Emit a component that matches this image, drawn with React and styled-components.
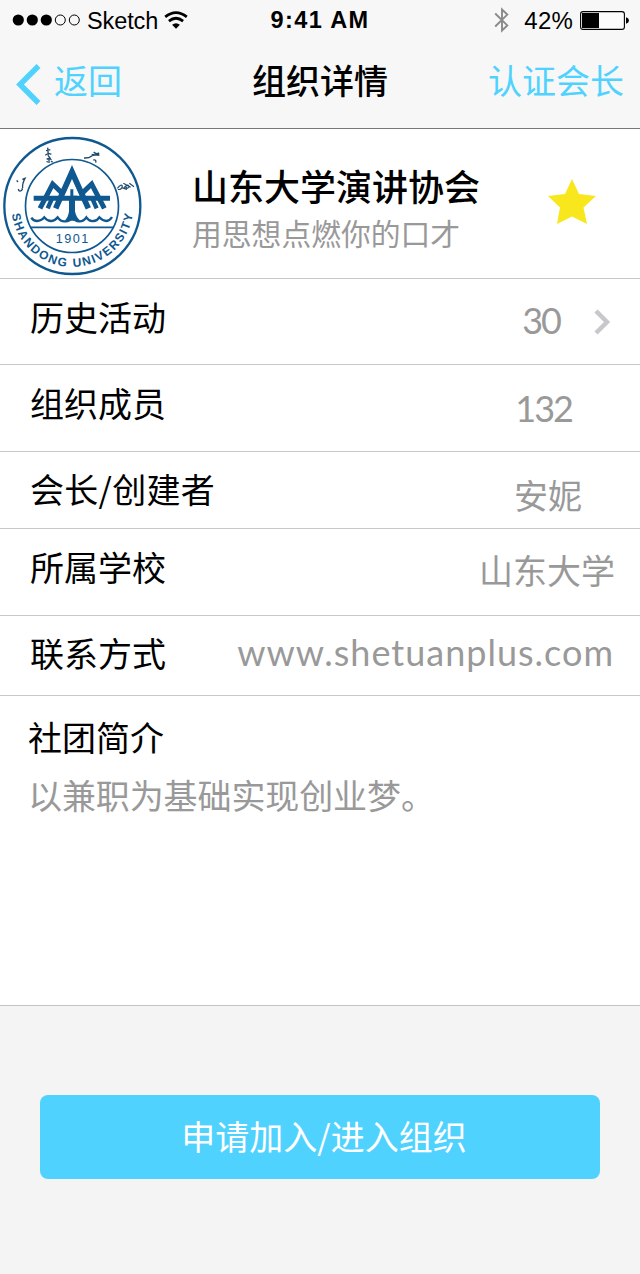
import React from 'react';
import styled, { createGlobalStyle } from 'styled-components';

const cjk = '"Noto Sans CJK SC", sans-serif';
const helv = '"Liberation Sans", Arial, sans-serif';

const GlobalStyle = createGlobalStyle`
  * { box-sizing: border-box; }
  body { margin: 0; background: #f4f4f4; }
`;

const Screen = styled.div`
  width: 640px;
  height: 1274px;
  display: flex;
  flex-direction: column;
  background: #f4f4f4;
  font-family: ${cjk};
  color: #000;
  white-space: nowrap;
  overflow: hidden;
`;

const Header = styled.header`
  height: 129px;
  flex: none;
  background: #f7f7f7;
  border-bottom: 1px solid #777;
`;

const StatusBar = styled.div`
  height: 40px;
  display: grid;
  grid-template-columns: 1fr auto 1fr;
  align-items: center;
  font: 24px/40px ${helv};
`;

const StatusGroup = styled.div`
  display: flex;
  align-items: center;
  height: 40px;
  justify-content: ${(p) => (p.$end ? 'flex-end' : 'flex-start')};
  padding: ${(p) => (p.$end ? '0 11px 0 0' : '0 0 0 12px')};
`;

const Carrier = styled.span`
  margin: 1px 6px 0 7px;
  font-size: 23.5px;
  letter-spacing: -0.1px;
`;

const Clock = styled.span`
  font-weight: 700;
  font-size: 23.5px;
  letter-spacing: 1.4px;
`;

const Percent = styled.span`
  margin: 1px 7px 0 14px;
  font-size: 24px;
  letter-spacing: 0.2px;
`;

const NavBar = styled.nav`
  height: 88px;
  display: grid;
  grid-template-columns: 1fr auto 1fr;
  font-size: 34px;
  line-height: 34px;
  padding: 23px 16px 0 16px;
`;

const NavLink = styled.a`
  display: flex;
  color: #50d2ff;
  gap: 13px;
  justify-content: ${(p) => (p.$end ? 'flex-end' : 'flex-start')};
`;

const NavTitle = styled.h1`
  margin: 0;
  font-size: 34px;
  line-height: 34px;
  font-weight: 500;
`;

const BackIcon = styled.svg`
  margin-top: 1px;
  flex: none;
`;

const Profile = styled.section`
  height: 150px;
  flex: none;
  display: flex;
  background: #fff;
  border-bottom: 1px solid #c8c7cc;
`;

const ProfileText = styled.div`
  margin-left: 42px;
  width: 356px;
  padding-top: 38px;
`;

const OrgName = styled.h2`
  margin: 0;
  font-size: 36px;
  line-height: 36px;
  font-weight: 500;
`;

const Slogan = styled.p`
  margin: 14px 0 0;
  font-size: 29.8px;
  line-height: 30px;
  color: #999;
`;

const Star = styled.svg`
  margin-top: 50px;
`;

const Row = styled.div`
  height: ${(p) => p.$height}px;
  flex: none;
  display: flex;
  justify-content: space-between;
  padding-left: 30px;
  background: #fff;
  border-bottom: 1px solid #c8c8c8;
  font-size: 34px;
  line-height: 34px;
`;

const Label = styled.span`
  margin-top: ${(p) => p.$top}px;
  letter-spacing: ${(p) => p.$spacing || 0}px;
`;

const Value = styled.span`
  display: flex;
  margin-top: ${(p) => p.$top}px;
  margin-right: ${(p) => p.$right}px;
  color: #999;
  font-family: ${(p) => (p.$latin ? 'Lato, sans-serif' : cjk)};
  font-size: ${(p) => p.$size || 34}px;
  letter-spacing: ${(p) => p.$spacing || 0}px;
`;

const Chevron = styled.svg`
  margin: 6px 0 0 34px;
`;

const About = styled.section`
  height: 310px;
  flex: none;
  background: #fff;
  border-bottom: 1px solid #c4c4c4;
  padding: 24px 28px 0;
  font-size: 34px;
  line-height: 34px;
`;

const AboutTitle = styled.h3`
  margin: 0;
  font: inherit;
`;

const AboutText = styled.p`
  margin: 24px 0 0;
  color: #999;
  letter-spacing: -0.1px;
`;

const JoinButton = styled.button`
  display: block;
  flex: none;
  width: 560px;
  height: 84px;
  margin: 89px 40px 0;
  padding: 0 0 3px 8px;
  border: 0;
  border-radius: 8px;
  background: #50d2ff;
  color: #fff;
  font: 34px/34px ${cjk};
`;

function SignalDots() {
  return (
    <svg width="68" height="12" viewBox="0 0 68 12">
      {[0, 1, 2, 3, 4].map((i) => (
        <circle key={i} cx={6.3 + i * 14} cy="6" r={i < 3 ? 5.6 : 5} fill={i < 3 ? '#000' : 'none'} stroke="#000" strokeWidth={i < 3 ? 0 : 1} />
      ))}
    </svg>
  );
}

function WifiIcon() {
  return (
    <svg width="24" height="18" viewBox="0 0 24 18" fill="none" stroke="#000" strokeWidth="2.7">
      <path d="M1.2 5.9 Q12 -2.6 22.8 5.9" />
      <path d="M4.9 10.1 Q12 4.4 19.1 10.1" />
      <path d="M8.1 13.8 Q12 10.6 15.9 13.8 L12 17.8Z" fill="#000" stroke="none" />
    </svg>
  );
}

function BluetoothIcon() {
  return (
    <svg width="16" height="26" viewBox="0 0 16 26" fill="none" stroke="#8a8a8a" strokeWidth="1.9">
      <path d="M1.2 6.5 L13.3 18.4 L8 23.5 V2.5 L13.3 7.6 L1.2 19.5" />
    </svg>
  );
}

function BatteryIcon() {
  return (
    <svg width="49" height="19" viewBox="0 0 49 19">
      <rect x=".6" y=".6" width="43.8" height="17.8" rx="2.5" fill="#fbfbfb" stroke="#000" strokeWidth="1.1" />
      <rect x="2" y="2" width="17" height="15" fill="#000" />
      <path d="M46 6.2 Q49 7.2 49 9.5 Q49 11.8 46 12.8Z" />
    </svg>
  );
}

function UniversityLogo() {
  const blue = '#0f5890';
  return (
    <svg width="150" height="149" viewBox="0 3 450 447" fill="none" stroke={blue}>
      <defs>
        <path id="rim" d="M 35.6 258 A 183 183 0 0 0 398.4 258" />
      </defs>
      <circle cx="217" cy="234" r="204" strokeWidth="7" />
      <circle cx="216" cy="234" r="139.5" strokeWidth="5" />
      <path d="M91 298 H341" strokeWidth="5" />
      <path d="M101 211 H330" strokeWidth="15" />
      <g strokeWidth="15">
        <path d="M120 241 L158 168 L187 196" />
        <path d="M313 241 L275 168 L246 196" />
        <path d="M167 241 L216 132 L265 241" strokeWidth="17" />
        <path d="M143 241 L155 214 M290 241 L278 214" strokeWidth="13" />
      </g>
      <path d="M211 184 H220 V203 H232 L225 212 V250 Q228 268 241 278 H194 Q205 268 207 250 V218 L200 206 H211Z" fill={blue} stroke="none" />
      <path d="M94 269 Q100 279 111 279 Q124 279 133 268 Q142 280 155 279 Q165 278 173 268 Q182 281 195 280 Q208 281 216 268 Q226 281 239 280 Q251 280 259 268 Q268 281 280 279 Q291 279 298 268 Q308 279 319 279 Q330 278 336 267" strokeWidth="7" />
      <g strokeWidth="4" stroke="#20486a">
        <path d="M50 157 L54 162 M55 183 Q57 193 65 187 Q69 184 65 181 M67 154 L75 151 Q66 168 68 180" />
        <path d="M138 68 L151 65 M143 59 L145 82 M136 82 Q145 74 154 79 M144 82 L151 91 M140 94 Q149 88 154 96 M147 91 V105 M140 100 L143 103 M153 99 L158 103" />
        <path d="M252 90 Q267 91 276 83 L298 78 M281 72 Q290 81 297 74 M275 79 L298 82 M280 96 Q290 94 287 104" />
        <path d="M352 181 Q365 166 367 175 Q364 187 354 184 M370 166 L392 178 M372 179 Q386 165 387 177 Q382 185 376 175 M388 166 L402 176 M365 179 L381 184" strokeWidth="3.5" />
      </g>
      <g fill={blue} stroke="none" fontFamily={helv}>
        <text x="167" y="346" fontSize="38" textLength="98">1901</text>
        <text fontSize="36" fontWeight="700">
          <textPath href="#rim" textLength="526">SHANDONG UNIVERSITY</textPath>
        </text>
      </g>
    </svg>
  );
}

export default function App() {
  return (
    <Screen>
      <GlobalStyle />
      <Header>
        <StatusBar>
          <StatusGroup>
            <SignalDots />
            <Carrier>Sketch</Carrier>
            <WifiIcon />
          </StatusGroup>
          <Clock>9:41 AM</Clock>
          <StatusGroup $end>
            <BluetoothIcon />
            <Percent>42%</Percent>
            <BatteryIcon />
          </StatusGroup>
        </StatusBar>
        <NavBar>
          <NavLink>
            <BackIcon width="25" height="41" viewBox="0 0 25 41" fill="none" stroke="#50d2ff" strokeWidth="5.5">
              <path d="M22.5 2 L4 20.5 L22.5 39" />
            </BackIcon>
            返回
          </NavLink>
          <NavTitle>组织详情</NavTitle>
          <NavLink $end>认证会长</NavLink>
        </NavBar>
      </Header>

      <Profile>
        <UniversityLogo />
        <ProfileText>
          <OrgName>山东大学演讲协会</OrgName>
          <Slogan>用思想点燃你的口才</Slogan>
        </ProfileText>
        <Star width="48" height="46" viewBox="0 0 48 46" fill="#f8e71c">
          <path d="M24 0 L31 15 L48 17 L35.5 28.5 L39 45 L24 37.5 L9 45 L12 28.5 L0 17 L17 15Z" />
        </Star>
      </Profile>

      <Row $height={86}>
        <Label $top={21}>历史活动</Label>
        <Value $top={24} $right={29} $latin $size={36} $spacing={-2}>
          30
          <Chevron width="17" height="26" viewBox="0 0 17 26" fill="none" stroke="#c7c7cc" strokeWidth="4.5">
            <path d="M2 2 L13 13 L2 24" />
          </Chevron>
        </Value>
      </Row>
      <Row $height={87}>
        <Label $top={21}>组织成员</Label>
        <Value $top={26} $right={68} $latin $size={36} $spacing={-2}>132</Value>
      </Row>
      <Row $height={77}>
        <Label $top={20} $spacing={0.3}>会长/创建者</Label>
        <Value $top={26} $right={58}>安妮</Value>
      </Row>
      <Row $height={87}>
        <Label $top={21}>所属学校</Label>
        <Value $top={24} $right={25}>山东大学</Value>
      </Row>
      <Row $height={80}>
        <Label $top={20}>联系方式</Label>
        <Value $top={19} $right={26} $latin $size={36} $spacing={1}>www.shetuanplus.com</Value>
      </Row>

      <About>
        <AboutTitle>社团简介</AboutTitle>
        <AboutText>以兼职为基础实现创业梦。</AboutText>
      </About>

      <JoinButton>申请加入/进入组织</JoinButton>
    </Screen>
  );
}
